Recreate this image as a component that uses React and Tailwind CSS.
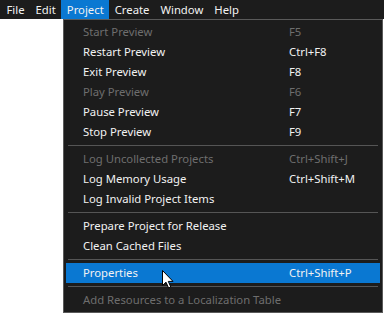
const menus = ["File", "Edit", "Project", "Create", "Window", "Help"];

const groups = [
  [
    { label: "Start Preview", keys: "F5", off: true },
    { label: "Restart Preview", keys: "Ctrl+F8" },
    { label: "Exit Preview", keys: "F8" },
    { label: "Play Preview", keys: "F6", off: true },
    { label: "Pause Preview", keys: "F7" },
    { label: "Stop Preview", keys: "F9" },
  ],
  [
    { label: "Log Uncollected Projects", keys: "Ctrl+Shift+J", off: true },
    { label: "Log Memory Usage", keys: "Ctrl+Shift+M" },
    { label: "Log Invalid Project Items" },
  ],
  [{ label: "Prepare Project for Release" }, { label: "Clean Cached Files" }],
  [{ label: "Properties", keys: "Ctrl+Shift+P", active: true }],
  [{ label: "Add Resources to a Localization Table", off: true }],
];

function Cursor() {
  return (
    <svg width="13" height="20" viewBox="0 0 13 20" className="absolute left-[161px] top-[269px] pointer-events-none">
      <path
        d="M1.5 1.5 L1.5 16.5 L5 13.2 L7.6 19 L9.8 18 L7.3 12.4 L12 12.4 Z"
        fill="#fff"
        stroke="#000"
        strokeWidth="1"
        strokeLinejoin="miter"
      />
    </svg>
  );
}

function Row({ item }) {
  const color = item.off ? "text-[#6e6e6e]" : "text-[#f2f2f2]";
  return (
    <div
      className={`flex h-5 items-center pl-[17px] ${item.active ? "bg-[#0a78d2]" : ""} ${color}`}
    >
      <span className="w-[206px] whitespace-nowrap">{item.label}</span>
      <span className="whitespace-nowrap">{item.keys}</span>
    </div>
  );
}

export default function App() {
  return (
    <div
      className="relative h-[313px] w-[384px] overflow-hidden bg-white text-[11.3px] leading-none"
      style={{ fontFamily: '"Noto Sans", "Open Sans", sans-serif' }}
    >
      <div className="flex h-[19px] items-center bg-[#1c1c1c] pl-px text-[#f2f2f2]">
        {menus.map((m) => (
          <div
            key={m}
            className={`flex h-full items-center px-[5.5px] ${m === "Project" ? "bg-[#0a78d2]" : ""}`}
          >
            {m}
          </div>
        ))}
        <div className="flex-1 h-full" />
      </div>
      <div className="ml-[63px] w-[320px] h-[294px] border border-[#5a5a5a] bg-[#1c1c1c] px-[2px] py-[2px]">
        {groups.map((g, i) => (
          <div key={i}>
            {i > 0 && (
              <div className="py-[3px] px-[2px]">
                <div className="h-px bg-[#555555]" />
              </div>
            )}
            {g.map((item) => (
              <Row key={item.label} item={item} />
            ))}
          </div>
        ))}
      </div>
      <Cursor />
    </div>
  );
}
